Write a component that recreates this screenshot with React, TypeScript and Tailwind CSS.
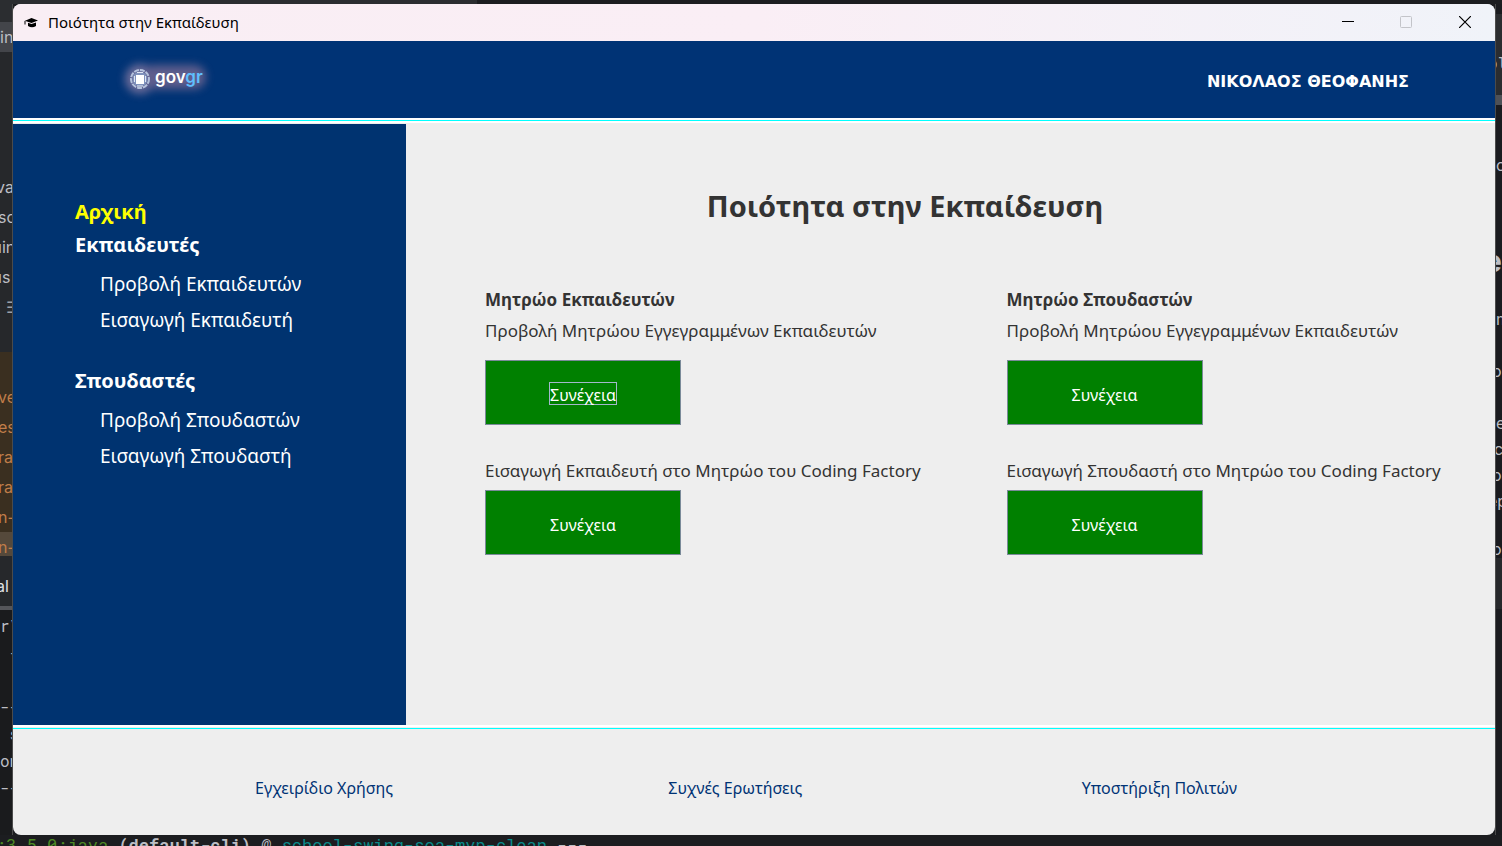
import React from "react";

type Fragment = { text: string; style: string };

const leftTop: Fragment[] = [
  { text: "va", style: "-ml-1 text-[#bcbec4]" },
  { text: "sc", style: "-ml-0.5 text-[#bcbec4]" },
  { text: "ıin", style: "-ml-0.5 text-[#bcbec4]" },
  { text: "ıs", style: "-ml-0.5 text-[#bcbec4]" },
  { text: "☰", style: "ml-1.5 text-[#9da0a8]" },
];

const leftBrown = ["ve", "es", "rat", "rat", "n-", "n-"];

function Backdrop({ children }: { children: React.ReactNode }) {
  return (
    <div className="flex min-h-screen flex-col bg-[#1c1d20] font-['Inter','Liberation_Sans',sans-serif]">
      <div className="flex h-1 shrink-0">
        <div className="h-full w-[477px] bg-[#2b2d30]" />
      </div>
      <div className="flex flex-1">
        <div aria-hidden="true" className="flex w-[13px] shrink-0 flex-col overflow-hidden whitespace-pre border-r border-[#4b4b4b] bg-[#1a1b1d] text-base text-[#bcbec4]">
          <div className="h-[18px] bg-[#2b2d30]" />
          <div className="h-[30px] bg-[#43454a] leading-[30px]">in</div>
          <div className="h-[300px] bg-[#26282b] pt-[120px]">
            {leftTop.map((f, i) => (
              <div key={i} className={`h-[30px] leading-[30px] ${f.style}`}>
                {f.text}
              </div>
            ))}
          </div>
          <div className="h-[204px] bg-[#3a2f20] pt-[30px] text-[#c07d49]">
            {leftBrown.map((t, i) => (
              <div key={i} className="-ml-0.5 h-[30px] leading-[30px] last:h-6 last:bg-[#55493b]">
                {t}
              </div>
            ))}
          </div>
          <div className="h-[50px] bg-[#26282b] pt-[18px] text-[#dfe1e5]">
            <div className="-ml-1">al</div>
          </div>
          <div className="h-1 bg-[#55565a]" />
          <div className="pt-0.5 font-['Roboto_Mono','DejaVu_Sans_Mono',monospace] leading-[27px]">
            <div>r\</div>
            <div> -</div>
            <div> </div>
            <div>--</div>
            <div> s</div>
            <div>on</div>
            <div>--</div>
          </div>
        </div>
        {children}
        <div aria-hidden="true" className="flex w-[7px] shrink-0 flex-col overflow-hidden whitespace-nowrap border-l border-[#4b4b4b] bg-[#1a1b1f] text-base text-[#bcbec4]">
          <div className="h-[10px]" />
          <div className="h-[81px] bg-[#2b2d30] pt-[38px] font-['DejaVu_Sans_Mono',monospace]">
            <div className="-ml-2">ol</div>
          </div>
          <div className="h-[10px] bg-[#4e5157]" />
          <div className="h-[48px]" />
          <div className="h-[90px]">o</div>
          <div className="h-[64px] text-3xl font-bold">
            <div className="-ml-3">e</div>
          </div>
          <div className="h-[52px]">m</div>
          <div className="h-[52px]"><div className="-ml-1">or</div></div>
          <div className="h-[26px]">e</div>
          <div className="h-[26px]"><div className="-ml-0.5">ca</div></div>
          <div className="h-[26px]"><div className="-ml-1">o</div></div>
          <div className="h-[48px]"><div className="-ml-2">ep</div></div>
          <div className="h-[21px]"><div className="-ml-1">op</div></div>
          <div className="h-[51px] bg-[#26282b]" />
        </div>
      </div>
      <div aria-hidden="true" className="h-[11px] shrink-0 overflow-hidden whitespace-pre font-['Roboto_Mono','DejaVu_Sans_Mono',monospace] text-[17px] leading-[20px] text-[#bcbec4]">
        <div className="-ml-1">
          <span className="text-[#4e8a25]">:3.5.0:java </span>
          <span className="font-bold">(default-cli)</span>
          <span> @ </span>
          <span className="text-[#0a8a8a]">school-swing-soa-mvp-clean</span>
          <span> ---</span>
        </div>
      </div>
    </div>
  );
}

function TitleBar() {
  return (
    <div className="flex h-[37px] shrink-0 items-center bg-linear-to-r from-[#f9eef4] via-[#faeef5] to-[#f0f3f9] pl-[11px]">
      <svg className="h-[10px] w-[14px]" viewBox="0 0 14 10" aria-hidden="true">
        <path d="M7.5 0 14 2.5 7.5 5 1.5 3v3.5H.5V3Z M4 4.8 7.5 6 12 4.5V8Q8 10.500 4 8Z" />
      </svg>
      <span className="ml-[10px] pb-0.5 font-['Noto_Sans',sans-serif] text-[15px] leading-5 text-black">Ποιότητα στην Εκπαίδευση</span>
      <div className="ml-auto flex h-full">
        <button aria-label="Minimize" className="flex h-full w-[58px] items-center justify-center">
          <svg width="12" height="12" viewBox="0 0 12 12"><path d="M0 4.500h12" stroke="#000" /></svg>
        </button>
        <button aria-label="Maximize" disabled className="flex h-full w-[58px] items-center justify-center pb-0.5">
          <svg width="12" height="12" viewBox="0 0 12 12"><rect x=".5" y=".5" width="11" height="11" rx="1" fill="none" stroke="#c3c4c9" /></svg>
        </button>
        <button aria-label="Close" className="flex h-full w-[60px] items-center justify-center pb-0.5">
          <svg width="12" height="12" viewBox="0 0 12 12"><path d="M0 0l12 12M12 0 0 12" stroke="#000" strokeWidth="1.2" /></svg>
        </button>
      </div>
    </div>
  );
}

function Logo() {
  return (
    <svg className="h-[50px] w-[110px]" viewBox="0 0 110 50" role="img" aria-label="govgr">
      <defs>
        <filter id="glow" x="-30%" y="-80%" width="160%" height="260%">
          <feGaussianBlur stdDeviation="4" />
        </filter>
      </defs>
      <g filter="url(#glow)" opacity=".75">
        <circle cx="30" cy="24" r="15" fill="#8f7fa6" />
        <rect x="32" y="10" width="64" height="24" rx="12" fill="#7f6d95" />
      </g>
      <circle cx="30" cy="24" r="7.5" fill="#7f92bc" />
      <circle cx="30" cy="24" r="9" fill="none" stroke="#b4c2dc" strokeWidth="2" strokeDasharray="5 1" />
      <path d="M26 20h8v9h-8z" fill="#fff" />
      <path d="M24.500 21v6M35.500 21v6" stroke="#dfe6f3" />
      <path d="M27 17.500h6M27 31h6" stroke="#dfe6f3" />
      <text x="45" y="28" fontFamily="Inter, sans-serif" fontSize="17" fontWeight="600" fill="#fff">
        gov<tspan fill="#5fc0ff">gr</tspan>
      </text>
    </svg>
  );
}

function Separator() {
  return <div className="h-px shrink-0 bg-[#00ffff]" />;
}

function NavGroup({ title, items }: { title: string; items: string[] }) {
  return (
    <section>
      <h2 className="text-xl leading-7 font-bold">{title}</h2>
      <ul className="mt-[7px] pl-[25px]">
        {items.map((item) => (
          <li key={item}>
            <a href="#" className="block text-[19px] leading-9">{item}</a>
          </li>
        ))}
      </ul>
    </section>
  );
}

function ContinueButton({ focused = false }: { focused?: boolean }) {
  return (
    <button className="flex h-[65px] w-[196px] items-center justify-center border border-[#7a8a99] bg-[#008000] pt-0.5 text-base text-white">
      <span className={`border pt-1 leading-[17px] ${focused ? "border-[#a3b8cc]" : "border-transparent"}`}>Συνέχεια</span>
    </button>
  );
}

function Registry({ title, insert, focused }: { title: string; insert: string; focused?: boolean }) {
  return (
    <section className="min-w-0 whitespace-nowrap">
      <h2 className="text-[17px] leading-6 font-bold">{title}</h2>
      <p className="mt-[7px] text-[17px] leading-6">Προβολή Μητρώου Εγγεγραμμένων Εκπαιδευτών</p>
      <div className="mt-[17px]">
        <ContinueButton focused={focused} />
      </div>
      <p className="mt-[34px] text-[17px] leading-6">{insert}</p>
      <div className="mt-[7px]">
        <ContinueButton />
      </div>
    </section>
  );
}

export default function App() {
  return (
    <Backdrop>
      <div className="flex min-w-0 flex-1 flex-col overflow-hidden rounded-lg bg-[#eeeeee] font-['Noto_Sans',sans-serif] text-[#333333]">
        <TitleBar />
        <header className="flex h-[77px] shrink-0 items-center justify-between bg-[#003375] pr-[86px] pl-[97px]">
          <Logo />
          <span className="pt-1 font-['DejaVu_Sans',sans-serif] text-base leading-6 font-bold text-white">ΝΙΚΟΛΑΟΣ ΘΕΟΦΑΝΗΣ</span>
        </header>
        <div className="border-y-2 border-white">
          <Separator />
        </div>
        <div className="flex flex-1 pt-px">
          <nav className="w-[393px] shrink-0 bg-[#003370] pt-[74px] pl-[62px] text-white">
            <a href="#" className="block text-xl leading-7 font-bold text-[#ffff00]">Αρχική</a>
            <div className="mt-[5px] flex flex-col gap-[29px]">
              <NavGroup title="Εκπαιδευτές" items={["Προβολή Εκπαιδευτών", "Εισαγωγή Εκπαιδευτή"]} />
              <NavGroup title="Σπουδαστές" items={["Προβολή Σπουδαστών", "Εισαγωγή Σπουδαστή"]} />
            </div>
          </nav>
          <main className="min-w-0 flex-1 pt-[62px]">
            <h1 className="pr-[91px] text-center text-[29px] leading-10 font-bold">Ποιότητα στην Εκπαίδευση</h1>
            <div className="mt-[62px] grid grid-cols-2 gap-x-[78px] pr-[45px] pl-[79px]">
              <Registry title="Μητρώο Εκπαιδευτών" insert="Εισαγωγή Εκπαιδευτή στο Μητρώο του Coding Factory" focused />
              <Registry title="Μητρώο Σπουδαστών" insert="Εισαγωγή Σπουδαστή στο Μητρώο του Coding Factory" />
            </div>
          </main>
        </div>
        <div className="border-t-2 border-white pt-px">
          <Separator />
        </div>
        <footer className="grid h-[106px] shrink-0 grid-cols-3 items-center pt-3 pl-[242px] text-base leading-6 text-[#003375]">
          <a href="#">Εγχειρίδιο Χρήσης</a>
          <a href="#">Συχνές Ερωτήσεις</a>
          <a href="#">Υποστήριξη Πολιτών</a>
        </footer>
      </div>
    </Backdrop>
  );
}
